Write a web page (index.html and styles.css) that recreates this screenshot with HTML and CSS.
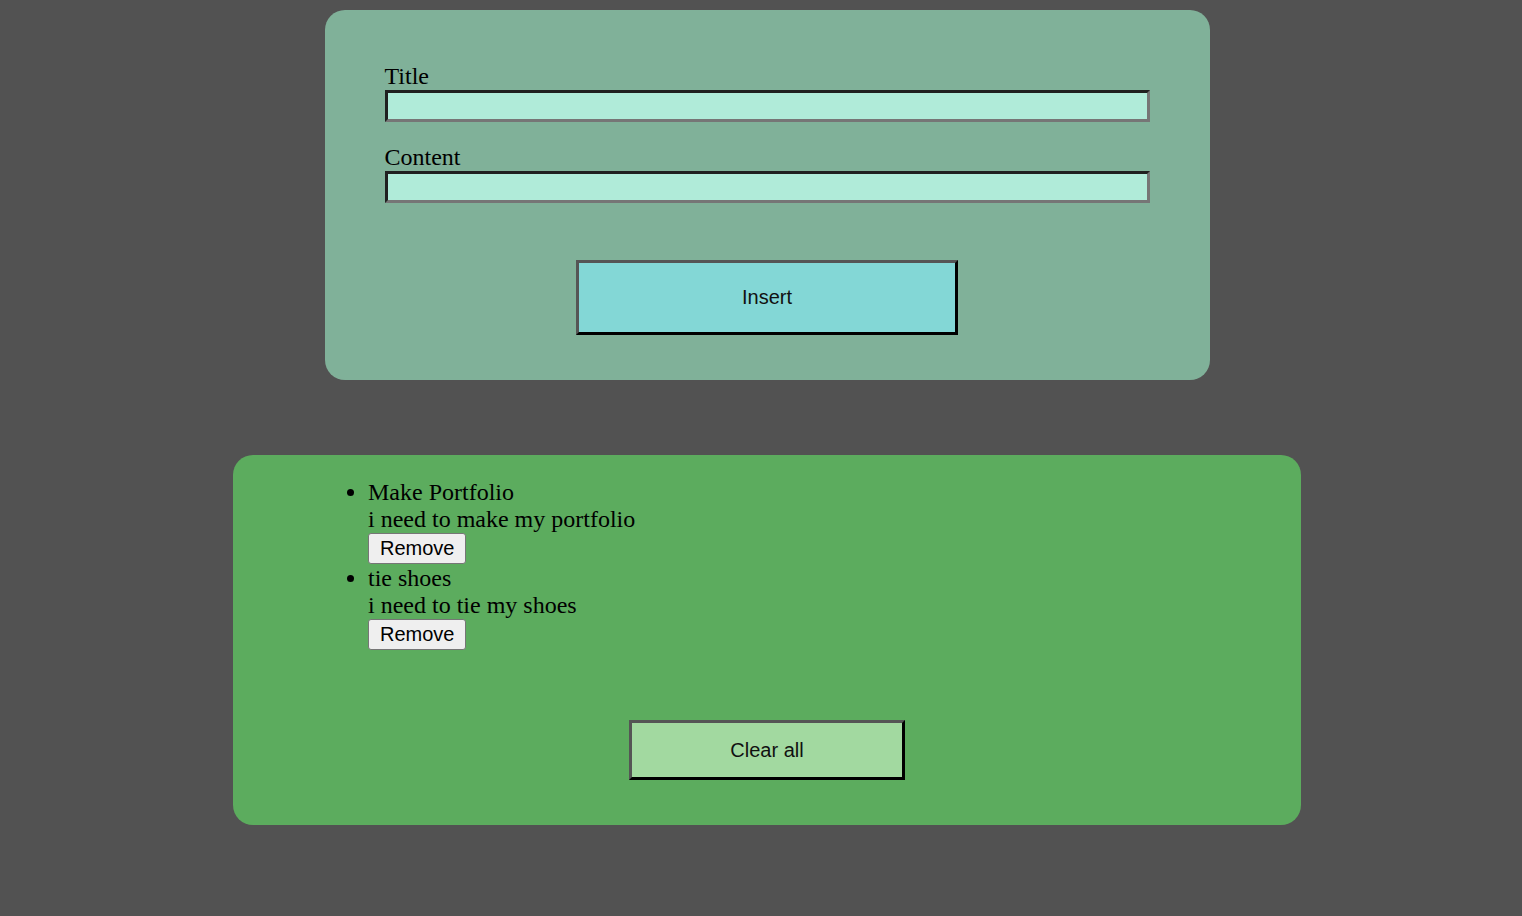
FILE: index.html
```html
<!DOCTYPE html>
<html>
<head>
<meta charset="utf-8">
<link rel="stylesheet" href="styles.css">
</head>
<body>
<div class="page">
  <form class="card card-form">
    <div class="field">
      <label class="label" for="title">Title</label>
      <input class="input" id="title" type="text">
    </div>
    <div class="field">
      <label class="label" for="content">Content</label>
      <input class="input" id="content" type="text">
    </div>
    <div class="actions">
      <button type="button" class="big-btn insert-btn">Insert</button>
    </div>
  </form>

  <section class="card card-list">
    <ul class="todo-list">
      <li class="todo">
        <div class="todo-title">Make Portfolio</div>
        <div class="todo-desc">i need to make my portfolio</div>
        <button type="button" class="remove-btn">Remove</button>
      </li>
      <li class="todo">
        <div class="todo-title">tie shoes</div>
        <div class="todo-desc">i need to tie my shoes</div>
        <button type="button" class="remove-btn">Remove</button>
      </li>
    </ul>
    <div class="actions">
      <button type="button" class="big-btn clear-btn">Clear all</button>
    </div>
  </section>
</div>
</body>
</html>
```

FILE: styles.css
```css
html, body {
  margin: 0;
  padding: 0;
  background: #525252;
}

body {
  font-family: "Liberation Serif", "Times New Roman", serif;
  font-size: 24px;
  line-height: 27px;
  color: #000;
}

.page {
  padding: 10px 0 0 12px;
  display: flex;
  flex-direction: column;
  align-items: center;
}

.card {
  box-sizing: border-box;
  border-radius: 20px;
}

.card-form {
  width: 885px;
  height: 370px;
  background: #80b199;
  padding: 53px 60px 0 60px;
  display: flex;
  flex-direction: column;
}

.field {
  display: flex;
  flex-direction: column;
  margin-bottom: 22px;
}

.label {
  display: block;
  height: 27px;
}

.input {
  box-sizing: border-box;
  width: 100%;
  height: 32px;
  margin: 0;
  padding: 0 4px;
  background: #b0ebd9;
  border-style: solid;
  border-width: 3px;
  border-color: #202020 #767676 #767676 #202020;
  font-family: "Liberation Sans", Arial, sans-serif;
  font-size: 16px;
  outline: none;
}

.actions {
  display: flex;
  justify-content: center;
}

.card-form .actions {
  margin-top: 35px;
}

.big-btn {
  box-sizing: border-box;
  margin: 0;
  padding: 0;
  border-style: solid;
  border-width: 3px;
  border-color: #555555 #000000 #000000 #555555;
  font-family: "Liberation Sans", Arial, sans-serif;
  font-size: 20px;
  color: #111;
  cursor: pointer;
}

.insert-btn {
  width: 382px;
  height: 75px;
  background: #83d7d6;
}

.card-list {
  margin-top: 75px;
  width: 1068px;
  height: 370px;
  background: #5cac5e;
  padding: 0 0 0 95px;
  display: flex;
  flex-direction: column;
}

.todo-list {
  margin: 24px 0 0 0;
  padding: 0 0 0 40px;
}

.todo-title,
.todo-desc {
  line-height: 27px;
  height: 27px;
}

.remove-btn {
  display: block;
  box-sizing: border-box;
  height: 31px;
  margin: 0 0 1px 0;
  padding: 0 11px;
  background: #efefef;
  border: 1px solid #767676;
  border-radius: 3px;
  font-family: "Liberation Sans", Arial, sans-serif;
  font-size: 20px;
  color: #000;
}

.card-list .actions {
  margin-top: 69px;
  margin-left: -95px;
}

.clear-btn {
  width: 276px;
  height: 60px;
  background: #a2d9a0;
}
```
